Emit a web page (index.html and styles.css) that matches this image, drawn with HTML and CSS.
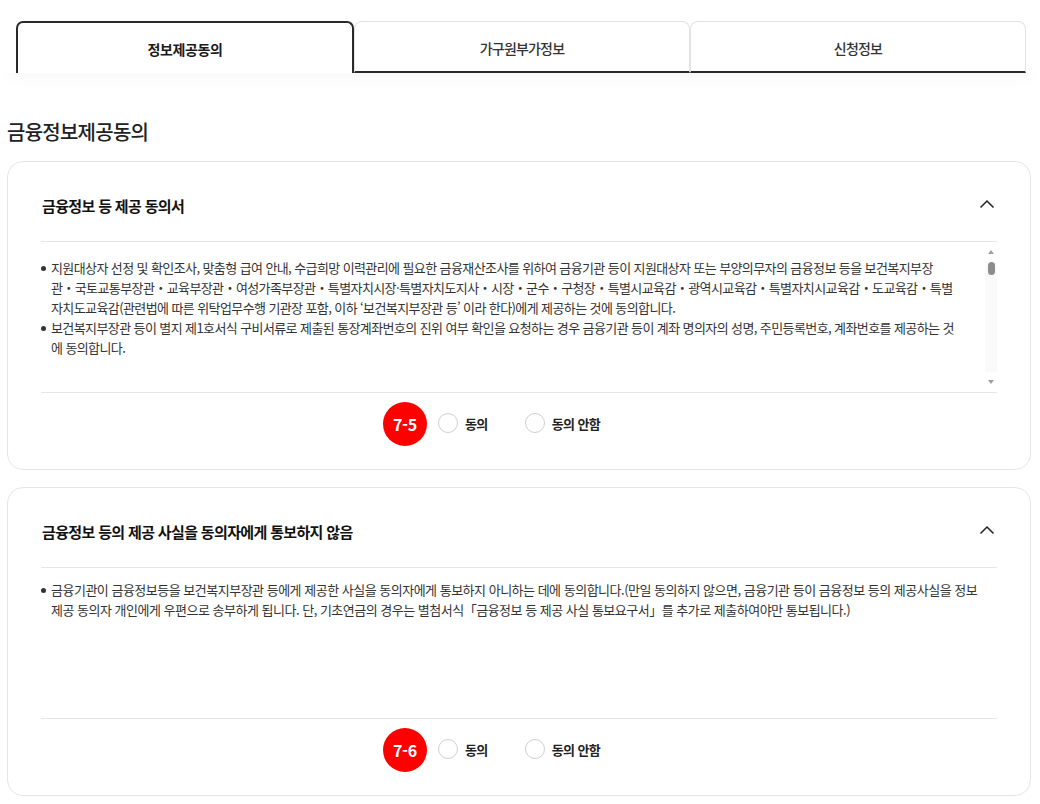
FILE: index.html
```html
<!DOCTYPE html>
<html lang="ko">
<head>
<meta charset="utf-8">
<title>금융정보제공동의</title>
<link rel="stylesheet" href="styles.css">
</head>
<body>
<div class="tabbar">
  <div class="tabs">
    <div class="tab tab-active">정보제공동의</div>
    <div class="tab">가구원부가정보</div>
    <div class="tab">신청정보</div>
  </div>
</div>

<main class="content">
  <h2 class="page-title">금융정보제공동의</h2>

  <section class="card">
    <div class="card-head">
      <h3 class="card-title">금융정보 등 제공 동의서</h3>
      <svg class="chev" width="16" height="10" viewBox="0 0 16 10"><polyline points="1.5,8.5 8,2 14.5,8.5" fill="none" stroke="#222" stroke-width="1.5"/></svg>
    </div>
    <div class="card-body card-body-scroll">
      <ul class="terms terms-scroll">
        <li>지원대상자 선정 및 확인조사, 맞춤형 급여 안내, 수급희망 이력관리에 필요한 금융재산조사를 위하여 금융기관 등이 지원대상자 또는 부양의무자의 금융정보 등을 보건복지부장<br>관・국토교통부장관・교육부장관・여성가족부장관・특별자치시장·특별자치도지사・시장・군수・구청장・특별시교육감・광역시교육감・특별자치시교육감・도교육감・특별<br>자치도교육감(관련법에 따른 위탁업무수행 기관장 포함, 이하 ‘보건복지부장관 등’ 이라 한다)에게 제공하는 것에 동의합니다.</li>
        <li>보건복지부장관 등이 별지 제1호서식 구비서류로 제출된 통장계좌번호의 진위 여부 확인을 요청하는 경우 금융기관 등이 계좌 명의자의 성명, 주민등록번호, 계좌번호를 제공하는 것<br>에 동의합니다.</li>
      </ul>
      <div class="sbar">
        <div class="sbar-btn"><span class="tri-up"></span></div>
        <div class="sbar-thumb"></div>
        <div class="sbar-track"></div>
        <div class="sbar-btn"><span class="tri-down"></span></div>
      </div>
    </div>
    <div class="answer">
      <div class="options">
        <span class="badge">7-5</span>
        <label class="opt"><span class="radio"></span><span class="opt-text">동의</span></label>
        <label class="opt"><span class="radio"></span><span class="opt-text">동의 안함</span></label>
      </div>
    </div>
  </section>

  <section class="card">
    <div class="card-head">
      <h3 class="card-title">금융정보 등의 제공 사실을 동의자에게 통보하지 않음</h3>
      <svg class="chev" width="16" height="10" viewBox="0 0 16 10"><polyline points="1.5,8.5 8,2 14.5,8.5" fill="none" stroke="#222" stroke-width="1.5"/></svg>
    </div>
    <div class="card-body">
      <ul class="terms terms-wide">
        <li>금융기관이 금융정보등을 보건복지부장관 등에게 제공한 사실을 동의자에게 통보하지 아니하는 데에 동의합니다.(만일 동의하지 않으면, 금융기관 등이 금융정보 등의 제공사실을 정보<br>제공 동의자 개인에게 우편으로 송부하게 됩니다. 단, 기초연금의 경우는 별첨서식「금융정보 등 제공 사실 통보요구서」를 추가로 제출하여야만 통보됩니다.)</li>
      </ul>
    </div>
    <div class="answer">
      <div class="options">
        <span class="badge">7-6</span>
        <label class="opt"><span class="radio"></span><span class="opt-text">동의</span></label>
        <label class="opt"><span class="radio"></span><span class="opt-text">동의 안함</span></label>
      </div>
    </div>
  </section>
</main>
</body>
</html>
```

FILE: styles.css
```css
* { box-sizing: border-box; }
html, body { margin: 0; padding: 0; background: #fff; }
body {
  font-family: "Noto Sans CJK KR", "Noto Sans", "Liberation Sans", sans-serif;
  color: #222;
}

.tabbar {
  padding: 21px 14px 0 16px;
  background: #fff;
  box-shadow: 0 12px 16px -8px rgba(0,0,0,0.035);
}
.tabs { display: flex; }
.tab {
  flex: 1 1 0;
  height: 52px;
  display: flex;
  align-items: center;
  justify-content: center;
  font-size: 14px;
  letter-spacing: -0.8px;
  color: #333;
  font-weight: 500;
  border: 1px solid #e3e3e3;
  border-bottom: 2px solid #2a2a2a;
  border-radius: 8px 8px 0 0;
  padding-top: 2px;
}
.tab-active {
  border: 2px solid #2a2a2a;
  border-bottom: none;
  border-radius: 7px 7px 0 0;
  font-weight: 700;
  color: #1a1a1a;
  letter-spacing: -0.4px;
}

.content { padding: 0 9px 20px 7px; }
.page-title {
  margin: 46px 0 16px;
  font-size: 20px;
  line-height: 26px;
  font-weight: 500;
  letter-spacing: -0.75px;
  color: #222;
}

.card {
  border: 1px solid #e6e6e6;
  border-radius: 16px;
  padding: 0 33px;
  margin-bottom: 17px;
  background: #fff;
}
.card-head {
  height: 80px;
  padding-top: 7px;
  border-bottom: 1px solid #e6e6e6;
  display: flex;
  align-items: center;
  justify-content: space-between;
}
.card-title {
  margin: 0 0 0 1px;
  font-size: 15px;
  font-weight: 700;
  letter-spacing: -0.65px;
  color: #111;
}
.chev { margin-right: 2px; margin-top: -2px; }

.card-body {
  height: 151px;
  border-bottom: 1px solid #e6e6e6;
  display: flex;
}
.terms {
  flex: 1;
  margin: 0;
  padding: 12px 0 0;
  list-style: none;
  font-size: 13px;
  line-height: 20px;
  letter-spacing: -0.6px;
  color: #333;
}
.terms-scroll { padding-top: 16px; }
.terms-wide { letter-spacing: -0.5px; }
.terms li {
  padding-left: 10px;
  text-indent: -10px;
  white-space: nowrap;
}
.terms li::before {
  content: "";
  display: inline-block;
  width: 5px;
  height: 5px;
  border-radius: 50%;
  background: #333;
  margin: 0 5px 2px 0;
  vertical-align: middle;
  text-indent: 0;
}

.sbar {
  width: 12px;
  display: flex;
  flex-direction: column;
  align-items: center;
  background: #fafafa;
}
.sbar-btn {
  height: 20px;
  width: 12px;
  display: flex;
  align-items: center;
  justify-content: center;
  background: #fff;
}
.sbar-track { flex: 1; }
.tri-up {
  width: 0; height: 0;
  border-left: 3.5px solid transparent;
  border-right: 3.5px solid transparent;
  border-bottom: 4px solid #a0a0a0;
}
.tri-down {
  width: 0; height: 0;
  border-left: 3.5px solid transparent;
  border-right: 3.5px solid transparent;
  border-top: 4px solid #a0a0a0;
}
.sbar-thumb {
  width: 7px;
  height: 13px;
  border-radius: 4px;
  background: #8c8c8c;
}

.answer {
  padding: 20px 0 36px;
  display: flex;
  justify-content: center;
}
.options {
  position: relative;
  display: flex;
  align-items: center;
  gap: 37px;
}
.badge {
  position: absolute;
  right: calc(100% + 11px);
  top: 50%;
  margin-top: -21px;
  width: 44px;
  height: 44px;
  border-radius: 50%;
  background: #ff0000;
  color: #fff;
  font-size: 16px;
  font-weight: 700;
  display: flex;
  align-items: center;
  justify-content: center;
  letter-spacing: -0.3px;
}
.opt {
  display: flex;
  align-items: center;
  gap: 7px;
  height: 20px;
}
.radio {
  width: 20px;
  height: 20px;
  border-radius: 50%;
  border: 1px solid #cfcfcf;
  background: #fff;
}
.opt-text {
  font-size: 13px;
  font-weight: 700;
  letter-spacing: -0.6px;
  color: #222;
}
```
